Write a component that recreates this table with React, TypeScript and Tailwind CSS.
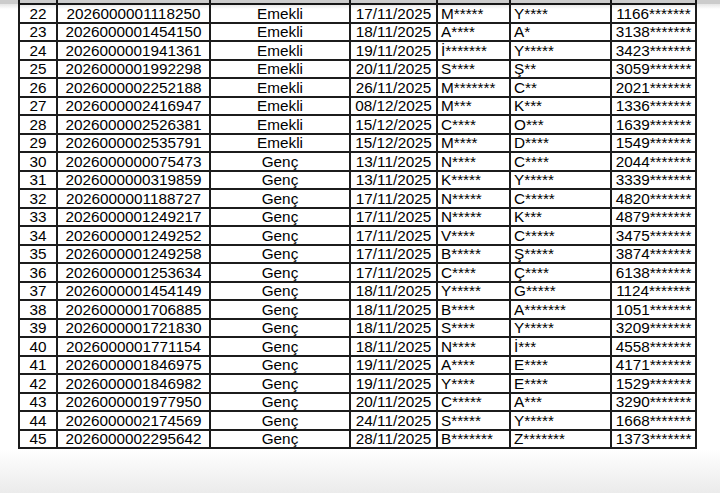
import React from 'react';

type Row = [string, string, string, string, string, string, string];

const rows: Row[] = [
  ['22', '2026000001118250', 'Emekli', '17/11/2025', 'M*****', 'Y****', '1166*******'],
  ['23', '2026000001454150', 'Emekli', '18/11/2025', 'A****', 'A*', '3138*******'],
  ['24', '2026000001941361', 'Emekli', '19/11/2025', 'İ*******', 'Y*****', '3423*******'],
  ['25', '2026000001992298', 'Emekli', '20/11/2025', 'S****', 'Ş**', '3059*******'],
  ['26', '2026000002252188', 'Emekli', '26/11/2025', 'M*******', 'C**', '2021*******'],
  ['27', '2026000002416947', 'Emekli', '08/12/2025', 'M***', 'K***', '1336*******'],
  ['28', '2026000002526381', 'Emekli', '15/12/2025', 'C****', 'O***', '1639*******'],
  ['29', '2026000002535791', 'Emekli', '15/12/2025', 'M****', 'D****', '1549*******'],
  ['30', '2026000000075473', 'Genç', '13/11/2025', 'N****', 'C****', '2044*******'],
  ['31', '2026000000319859', 'Genç', '13/11/2025', 'K*****', 'Y*****', '3339*******'],
  ['32', '2026000001188727', 'Genç', '17/11/2025', 'N*****', 'C*****', '4820*******'],
  ['33', '2026000001249217', 'Genç', '17/11/2025', 'N*****', 'K***', '4879*******'],
  ['34', '2026000001249252', 'Genç', '17/11/2025', 'V****', 'C*****', '3475*******'],
  ['35', '2026000001249258', 'Genç', '17/11/2025', 'B*****', 'Ş*****', '3874*******'],
  ['36', '2026000001253634', 'Genç', '17/11/2025', 'C****', 'Ç****', '6138*******'],
  ['37', '2026000001454149', 'Genç', '18/11/2025', 'Y*****', 'G*****', '1124*******'],
  ['38', '2026000001706885', 'Genç', '18/11/2025', 'B****', 'A*******', '1051*******'],
  ['39', '2026000001721830', 'Genç', '18/11/2025', 'S****', 'Y*****', '3209*******'],
  ['40', '2026000001771154', 'Genç', '18/11/2025', 'N****', 'İ***', '4558*******'],
  ['41', '2026000001846975', 'Genç', '19/11/2025', 'A****', 'E****', '4171*******'],
  ['42', '2026000001846982', 'Genç', '19/11/2025', 'Y****', 'E****', '1529*******'],
  ['43', '2026000001977950', 'Genç', '20/11/2025', 'C*****', 'A***', '3290*******'],
  ['44', '2026000002174569', 'Genç', '24/11/2025', 'S*****', 'Y*****', '1668*******'],
  ['45', '2026000002295642', 'Genç', '28/11/2025', 'B*******', 'Z*******', '1373*******'],
];

const widths = ['w-[38px]', 'w-[153px]', 'w-[140px]', 'w-[87px]', 'w-[73px]', 'w-[101px]', 'w-[85px]'];
// name columns are left aligned, the rest centred
const align = ['text-center', 'text-center', 'text-center', 'text-center', 'text-left pl-[3px]', 'text-left pl-[3px]', 'text-center'];

export default function App() {
  return (
    <div className="relative flex h-[493px] w-[720px] flex-col overflow-hidden bg-white font-['Liberation_Sans',Arial,sans-serif] text-[15.3px] text-black">
      {/* Table */}
      <div className="pl-[18px]">
        <table className="table-fixed border-collapse">
          <colgroup>
            {widths.map((w, i) => (
              <col key={i} className={w} />
            ))}
          </colgroup>
          <tbody>
            {/* cut-off row above */}
            <tr className="h-[4px]">
              {widths.map((_, i) => (
                <td key={i} className="border-x-2 border-b-2 border-[#1c1c1c] p-0" />
              ))}
            </tr>
            {rows.map((r) => (
              <tr key={r[0]} className="h-[18.5px]">
                {r.map((cell, i) => (
                  <td
                    key={i}
                    className={`border-2 border-[#1c1c1c] p-0 leading-none whitespace-nowrap ${align[i]}`}
                  >
                    {cell}
                  </td>
                ))}
              </tr>
            ))}
          </tbody>
        </table>
      </div>

      {/* Page bottom */}
      <div className="flex-1 bg-gradient-to-b from-white to-[#ebebeb]" />

      {/* Shadow at the top edge */}
      <div className="absolute inset-x-0 top-0 h-[4px] bg-black/20" />
      <div className="absolute inset-x-0 top-[4px] h-[5px] bg-gradient-to-b from-black/10 to-transparent" />
    </div>
  );
}
